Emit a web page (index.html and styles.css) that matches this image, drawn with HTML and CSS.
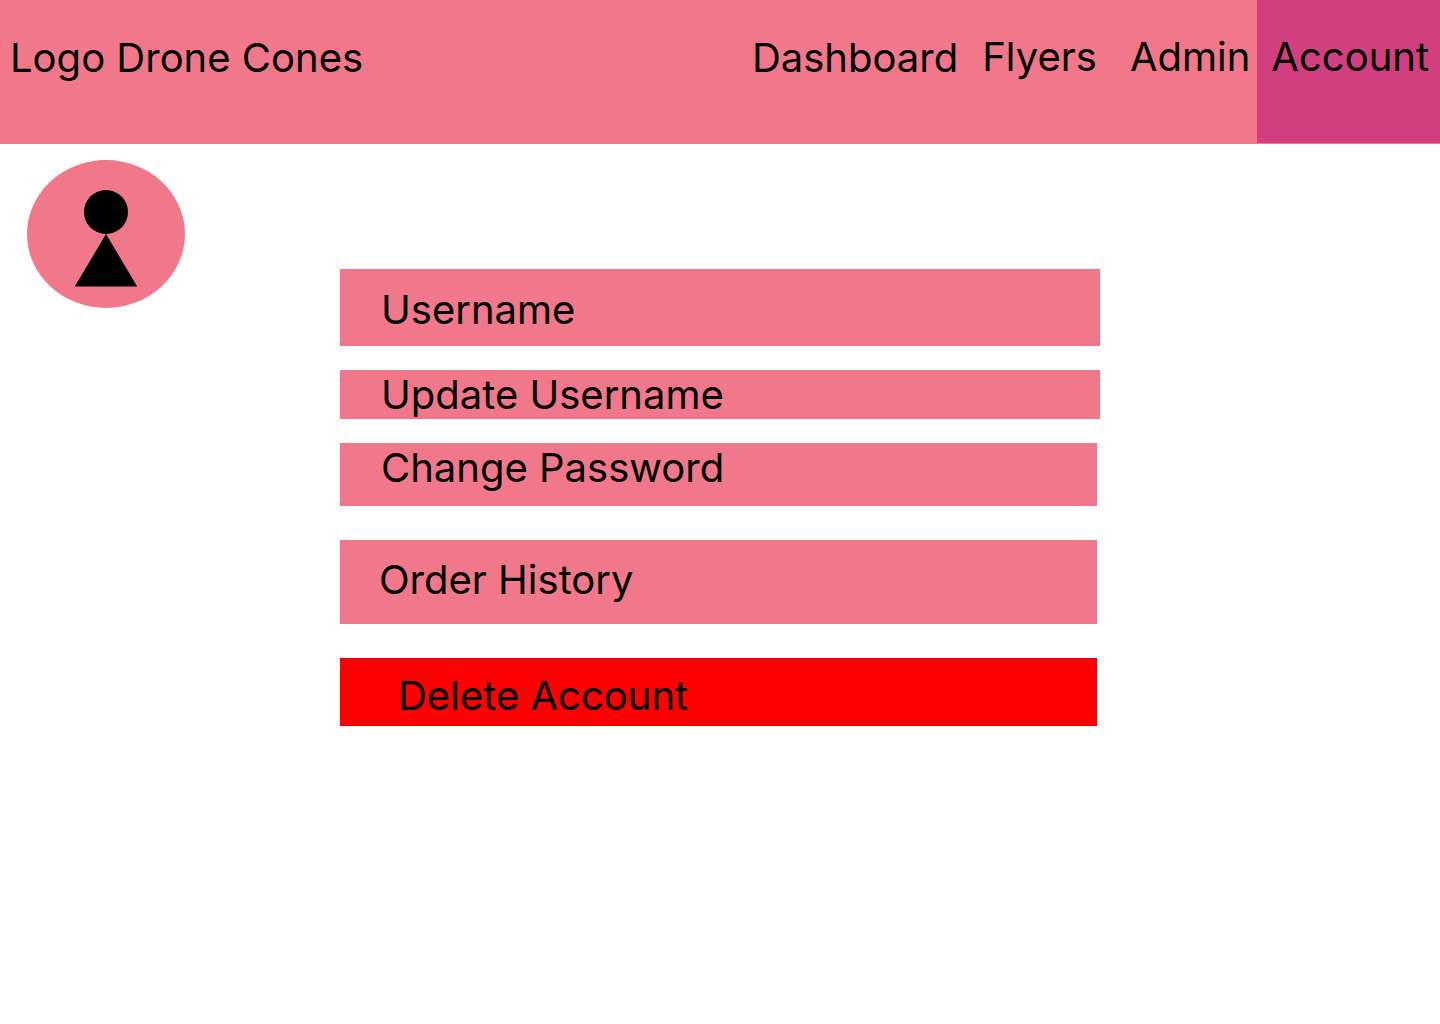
FILE: index.html
```html
<!DOCTYPE html>
<html lang="en">
<head>
<meta charset="utf-8">
<meta name="viewport" content="width=device-width, initial-scale=1">
<title>Account - Drone Cones</title>
<link rel="stylesheet" href="styles.css">
</head>
<body>
<header class="topbar">
  <a class="brand" href="#">Logo Drone Cones</a>
  <nav class="nav">
    <a class="nav-link nav-dashboard" href="#">Dashboard</a>
    <a class="nav-link nav-flyers" href="#">Flyers</a>
    <a class="nav-link nav-admin" href="#">Admin</a>
    <a class="nav-link nav-current" href="#" aria-current="page">Account</a>
  </nav>
</header>
<main class="page">
  <svg class="avatar" viewBox="0 0 158 148" role="img" aria-label="Profile picture">
    <ellipse cx="79" cy="74" rx="79" ry="74" fill="#f0788a"/>
    <circle cx="79" cy="52" r="22"/>
    <path d="M79 74 110.200 126.500H47.800Z"/>
  </svg>
  <section class="panel">
    <div class="row row-name">Username</div>
    <button class="row row-update" type="button">Update Username</button>
    <button class="row row-password" type="button">Change Password</button>
    <button class="row row-history" type="button">Order History</button>
    <button class="row row-delete" type="button">Delete Account</button>
  </section>
</main>
</body>
</html>
```
FILE: styles.css
```css
* {
  box-sizing: border-box;
}

body {
  margin: 0;
  background: #fff;
  color: #000;
  font-family: Inter, sans-serif;
  font-size: 40px;
  line-height: 48px;
}

a {
  color: inherit;
  text-decoration: none;
}

.topbar {
  display: flex;
  justify-content: space-between;
  min-height: 144px;
  background: #f0788a;
}

.brand {
  padding: 34px 0 0 10px;
}

.nav {
  display: flex;
}

.nav-link {
  padding-top: 33px;
}

.nav-dashboard {
  padding-top: 34px;
  margin-right: 24px;
}

.nav-flyers {
  margin-right: 33px;
}

.nav-admin {
  margin-right: 7px;
}

.nav-current {
  margin-bottom: 1px;
  padding-right: 11px;
  padding-left: 14px;
  background: #d23f7f;
}

.page {
  display: grid;
  grid-template-columns: 1fr minmax(0, 760px) 1fr;
  padding-top: 16px;
}

.avatar {
  width: 158px;
  height: 148px;
  margin-left: 27px;
}

.panel {
  display: flex;
  flex-direction: column;
  align-items: flex-start;
  padding-top: 109px;
}

.row {
  width: calc(100% - 3px);
  margin: 0;
  border: 0;
  padding: 0 41px;
  background: #f0788a;
  color: inherit;
  font: inherit;
  text-align: left;
}

.row-name {
  width: 100%;
  padding-top: 17px;
  padding-bottom: 12px;
}

.row-update {
  width: 100%;
  margin-top: 24px;
  padding-top: 1px;
}

.row-password {
  margin-top: 24px;
  padding-top: 1px;
  padding-bottom: 14px;
}

.row-history {
  margin-top: 34px;
  padding: 16px 39px 20px;
}

.row-delete {
  margin-top: 34px;
  padding: 14px 58px 6px;
  background: #f00;
}
```
